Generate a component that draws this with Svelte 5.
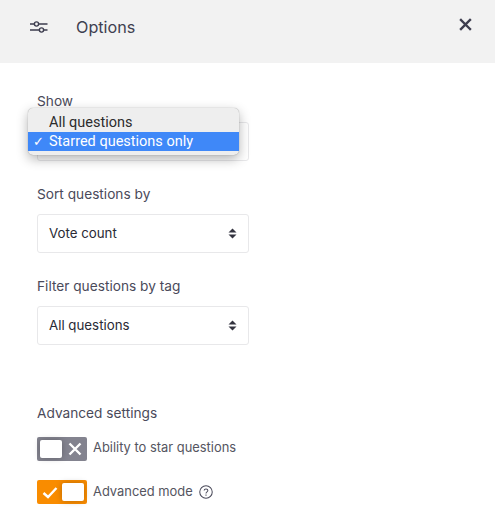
<script>
  const rows = [
    { label: 'Sort questions by', value: 'Vote count' },
    { label: 'Filter questions by tag', value: 'All questions' }
  ];
</script>

<div class="page">
  <header class="head">
    <svg class="sliders" width="20" height="16" viewBox="0 0 20 16" fill="none" stroke="#3c3c4e" stroke-width="1.4">
      <path d="M1 5H5M10 5H18.500" />
      <circle cx="7.500" cy="5" r="2.100" />
      <path d="M1 11H10M15 11H18.500" />
      <circle cx="12.500" cy="11" r="2.100" />
    </svg>
    <h1 class="title">Options</h1>
    <svg class="close" width="13" height="13" viewBox="0 0 13 13" stroke="#3c3c4e" stroke-width="2.400" stroke-linecap="square">
      <path d="M2 2L11 11M11 2L2 11" />
    </svg>
  </header>

  <main class="body">
    <section class="field">
      <div class="label tight">Show</div>
      <div class="select">
        <div class="menu">
          <div class="opt">All questions</div>
          <div class="opt on"><span class="tick">✓</span>Starred questions only</div>
        </div>
      </div>
    </section>

    {#each rows as row}
      <section class="field">
        <div class="label">{row.label}</div>
        <div class="select">
          <span class="value">{row.value}</span>
          <svg class="arrows" width="9" height="11" viewBox="0 0 9 11" fill="#33333f"><path d="M4.500 0.500L8.500 4.500H0.500ZM4.500 10.500L0.500 6.500H8.500Z" /></svg>
        </div>
      </section>
    {/each}

    <section class="advanced">
      <div class="label tight adv">Advanced settings</div>
      <div class="toggle-row first">
        <div class="toggle off">
          <span class="knob"></span>
          <svg width="14" height="14" viewBox="0 0 14 14" stroke="#fff" stroke-width="2.400" fill="none"><path d="M1.500 1.500L12.500 12.500M12.500 1.500L1.500 12.500" /></svg>
        </div>
        <span class="tlabel">Ability to star questions</span>
      </div>
      <div class="toggle-row">
        <div class="toggle onn">
          <svg width="16" height="13" viewBox="0 0 16 13" stroke="#fff" stroke-width="2.400" fill="none"><path d="M1.500 7L6 11L14.500 2" /></svg>
          <span class="knob"></span>
        </div>
        <span class="tlabel second">Advanced mode</span>
        <svg class="help" width="14" height="14" viewBox="0 0 15 15" fill="none" stroke="#4a4a5a" stroke-width="1.100">
          <circle cx="7.500" cy="7.500" r="6.700" />
          <path d="M5.500 6C5.500 3.800 9.500 3.800 9.500 6C9.500 7.400 7.500 7.300 7.500 9" />
          <path d="M7.500 10.200V11.400" />
        </svg>
      </div>
    </section>
  </main>
</div>

<style>
  :global(body) {
    margin: 0;
    background: #fff;
  }
  .page {
    width: 495px;
    height: 530px;
    overflow: hidden;
    font-family: Inter, "Liberation Sans", sans-serif;
    color: #4a4a5a;
  }
  .head {
    height: 63px;
    background: #f2f2f2;
    display: flex;
    align-items: center;
    padding: 0 23px 9px 29px;
    box-sizing: border-box;
  }
  .sliders {
    flex: none;
  }
  .close {
    flex: none;
    margin-bottom: 6px;
  }
  .title {
    margin: 0 0 0 27px;
    flex: 1;
    font-size: 16.2px;
    font-weight: 400;
    color: #3f3f50;
  }
  .body {
    padding: 30px 0 0 37px;
    width: 212px;
  }
  .field {
    margin-bottom: 24px;
  }
  .label {
    font-size: 13.7px;
    line-height: 18px;
    height: 17px;
    margin-bottom: 12px;
    color: #4a4a5a;
  }
  .tight {
    line-height: 16px;
  }
  .select {
    position: relative;
    height: 39px;
    box-sizing: border-box;
    border: 1px solid #e8e8ea;
    border-radius: 3px;
    display: flex;
    align-items: center;
    justify-content: space-between;
    padding: 0 11px 0 11px;
    font-size: 13.3px;
    color: #2a2a35;
    background: #fff;
  }
  .value {
    position: relative;
    top: -1px;
  }
  .menu {
    position: absolute;
    left: -10px;
    top: -15px;
    width: 211px;
    height: 47px;
    box-sizing: border-box;
    padding-top: 5px;
    background: #eeeeee;
    border-radius: 5px;
    box-shadow: 0 4px 12px rgba(0, 0, 0, 0.3), 0 0 1px rgba(0, 0, 0, 0.4);
    font-family: Roboto, "Liberation Sans", sans-serif;
    font-size: 14.5px;
    color: #2c2c2c;
  }
  .opt {
    height: 19px;
    line-height: 19px;
    padding-left: 21px;
    position: relative;
  }
  .on {
    background: #3f88f8;
    color: #fff;
  }
  .tick {
    position: absolute;
    left: 5px;
    font-size: 13px;
    font-weight: 700;
    font-family: "DejaVu Sans", sans-serif;
  }
  .advanced {
    margin-top: 60px;
  }
  .adv {
    margin-bottom: 15px;
  }
  .toggle-row {
    display: flex;
    align-items: center;
    height: 24px;
    margin-bottom: 19px;
    white-space: nowrap;
  }
  .toggle {
    flex: none;
    width: 50px;
    height: 24px;
    box-sizing: border-box;
    border-radius: 2px;
    display: flex;
    align-items: center;
    justify-content: space-between;
    padding: 3px;
  }
  .off {
    background: #83838f;
  }
  .off svg {
    margin-right: 2px;
  }
  .onn {
    background: #f98c00;
  }
  .onn svg {
    margin-left: 2px;
  }
  .knob {
    width: 22px;
    height: 18px;
    background: #fff;
    border-radius: 2px;
    box-shadow: 0 0 6px rgba(0, 0, 0, 0.25);
  }
  .tlabel {
    margin-left: 6px;
    font-size: 12.9px;
    color: #55555f;
    position: relative;
    top: -2px;
  }
  .tlabel.second {
    top: -1px;
  }
  .help {
    margin-left: 6px;
    flex: none;
  }
</style>
